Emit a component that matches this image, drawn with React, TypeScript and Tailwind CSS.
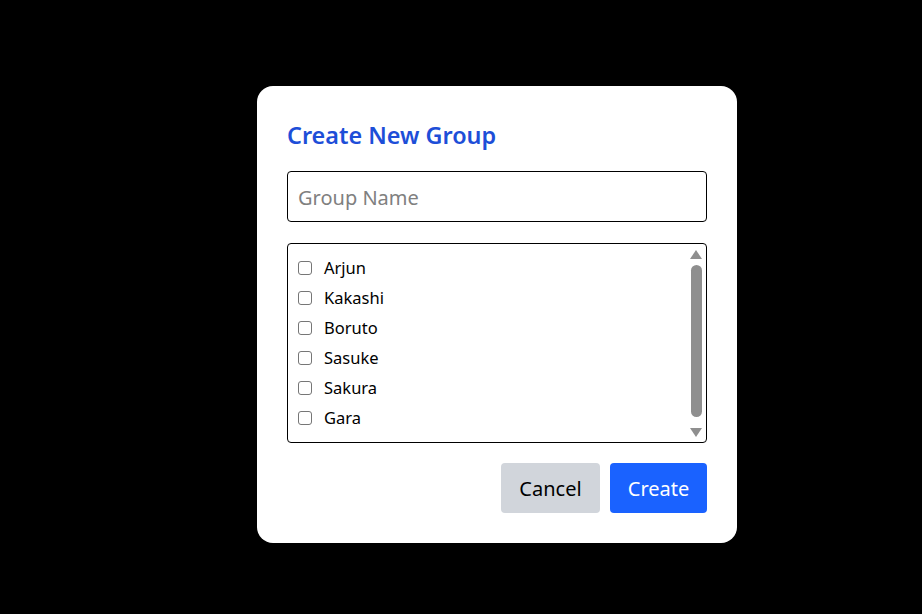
import React from "react";

const names = ["Arjun", "Kakashi", "Boruto", "Sasuke", "Sakura", "Gara"];

export default function App() {
  return (
    <div
      className="min-h-screen w-full bg-black pl-[257px] pt-[86px]"
      style={{ fontFamily: '"Segoe UI", "Noto Sans", sans-serif' }}
    >
      <div className="flex w-[480px] flex-col rounded-[16px] bg-white p-[30px]">
        <h2 className="mb-[18px] pt-[2px] text-[23.4px] font-semibold leading-[35px] text-[#1d4ed8]">
          Create New Group
        </h2>
        <input
          type="text"
          placeholder="Group Name"
          className="h-[51px] w-full rounded-[4px] border border-black px-[10px] pt-[2px] text-[20px] text-black placeholder:text-[#808080] outline-none"
        />
        <div className="mt-[21px] flex h-[200px] rounded-[4px] border border-black">
          <div className="flex flex-1 flex-col pt-[9px]">
            {names.map((n) => (
              <label key={n} className="flex h-[30px] items-center pl-[10px] text-[16.5px] text-black">
                <input
                  type="checkbox"
                  className="m-0 h-[14px] w-[14px] appearance-none rounded-[3px] border border-[#767676] bg-white"
                />
                <span className="ml-[12px]">{n}</span>
              </label>
            ))}
          </div>
          <div className="flex w-[17px] flex-col items-center pr-[3px]">
            <svg width="12" height="9" viewBox="0 0 12 9" className="mt-[6px]">
              <path d="M6 0 L12 9 L0 9 Z" fill="#8f8f8f" />
            </svg>
            <div className="mt-[6px] w-[11px] flex-1 rounded-full bg-[#8f8f8f]" />
            <svg width="12" height="9" viewBox="0 0 12 9" className="mb-[5px] mt-[11px]">
              <path d="M0 0 L12 0 L6 9 Z" fill="#8f8f8f" />
            </svg>
          </div>
        </div>
        <div className="mt-[20px] flex justify-end gap-[10px]">
          <button className="h-[50px] w-[99px] rounded-[4px] bg-[#d1d5db] pt-[2px] text-[20px] text-black">
            Cancel
          </button>
          <button className="h-[50px] w-[97px] rounded-[4px] bg-[#1a62ff] pt-[2px] text-[20px] text-white">
            Create
          </button>
        </div>
      </div>
    </div>
  );
}
